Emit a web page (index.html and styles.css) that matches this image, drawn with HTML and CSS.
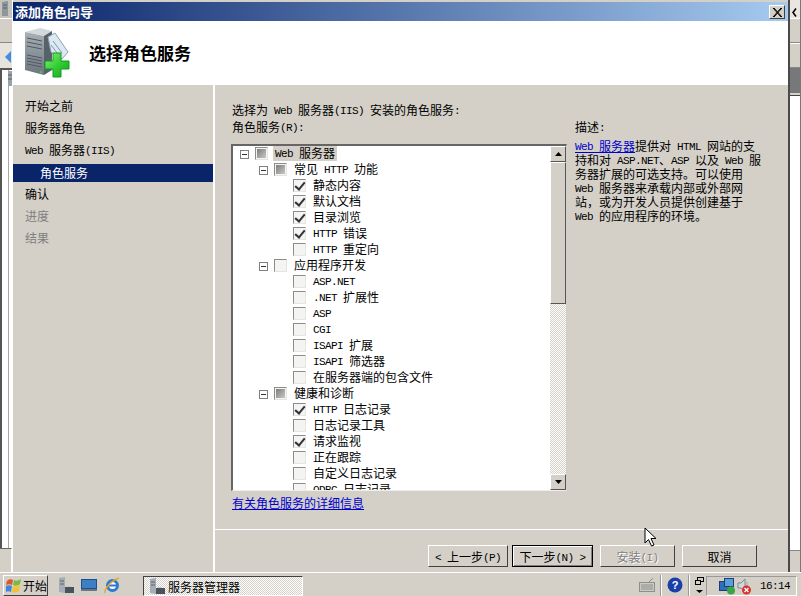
FILE: index.html
```html
<!DOCTYPE html>
<html lang="zh-CN">
<head>
<meta charset="UTF-8">
<title>添加角色向导</title>
<link rel="stylesheet" href="styles.css">
</head>
<body>
<div class="desktop">
  <div class="back-left">
    <div class="back-top"><svg width="6" height="15" viewBox="0 0 6 15"><path d="M0 1 L6 0 V15 H0 Z" fill="#8f979e"/><path d="M1 4 H5 M1 7 H5" stroke="#566069"/></svg></div>
    <div class="back-bar"></div>
    <div class="back-nav"><svg width="6" height="12" viewBox="0 0 6 12"><path d="M6 0 L0 6 L6 12 Z" fill="#3f8fdc"/></svg></div>
    <div class="back-pane"><svg width="5" height="15" viewBox="0 0 5 15"><path d="M0 0 H5 V15 H0 Z" fill="#9aa2a9"/><path d="M0 4 H5 M0 8 H5" stroke="#566069"/></svg></div>
    <div class="back-foot"></div>
  </div>

  <div class="wizard">
    <div class="titlebar">
      <span class="titlebar-text">添加角色向导</span>
      <span class="close-btn"><svg width="10" height="9" viewBox="0 0 10 9"><path d="M1 0 L9 9 M2 0 L10 9 M9 0 L1 9 M10 0 L2 9" stroke="#000" stroke-width="1"/></svg></span>
    </div>
    <div class="head">
      <svg class="head-icon" width="48" height="50" viewBox="0 0 48 50">
        <defs>
          <linearGradient id="front" x1="0" y1="0" x2="0" y2="1"><stop offset="0" stop-color="#a9b0b6"/><stop offset="1" stop-color="#6c757d"/></linearGradient>
          <linearGradient id="plus" x1="0" y1="0" x2="1" y2="1"><stop offset="0" stop-color="#8cf07a"/><stop offset="0.5" stop-color="#35cf35"/><stop offset="1" stop-color="#12a522"/></linearGradient>
        </defs>
        <path d="M1 4 L16 0 L28 3 L20 8 Z" fill="#d3d8dc"/>
        <path d="M1 4 L20 8 L20 47 L1 42 Z" fill="url(#front)"/>
        <path d="M20 8 L28 3 L28 42 L20 47 Z" fill="#57616a"/>
        <path d="M3 10 L18 13 M3 14 L18 17 M3 18 L18 21 M3 27 L18 30 M3 30 L18 33 M3 33 L18 36 M3 36 L18 39" stroke="#4f5962"/>
        <path d="M16 44 L18 44.5" stroke="#58c43f" stroke-width="2"/>
        <path d="M24 9 L31 5 L44 24 L38 31 L27 24 Z" fill="#dce8f2" stroke="#8ba3bb"/>
        <path d="M29 13 L38 25 M27 17 L34 26" stroke="#7f97ad"/>
        <path d="M29 25 H37 V33 H45 V41 H37 V49 H29 V41 H21 V33 H29 Z" fill="url(#plus)" stroke="#129a20" stroke-width="1"/>
      </svg>
      <h1 class="head-title">选择角色服务</h1>
    </div>
    <div class="body">
      <nav class="steps">
        <div class="step">开始之前</div>
        <div class="step">服务器角色</div>
        <div class="step"><span class="en">Web </span>服务器<span class="en">(IIS)</span></div>
        <div class="step step-current">角色服务</div>
        <div class="step">确认</div>
        <div class="step step-off">进度</div>
        <div class="step step-off">结果</div>
      </nav>
      <div class="main">
        <div class="panes">
          <div class="left-pane">
            <p class="line">选择为<span class="en"> Web </span>服务器<span class="en">(IIS) </span>安装的角色服务<span class="en">:</span></p>
            <p class="line">角色服务<span class="en">(R):</span></p>
            <div class="tree">
              <div class="tree-scroll">
                <div class="row"><i class="exp"></i><i class="cb part"></i><span class="lbl lbl-sel"><span class="en">Web </span>服务器</span></div>
                <div class="row lv1"><i class="exp"></i><i class="cb part"></i><span class="lbl">常见<span class="en"> HTTP </span>功能</span></div>
                <div class="row lv2"><i class="cb on"></i><span class="lbl">静态内容</span></div>
                <div class="row lv2"><i class="cb on"></i><span class="lbl">默认文档</span></div>
                <div class="row lv2"><i class="cb on"></i><span class="lbl">目录浏览</span></div>
                <div class="row lv2"><i class="cb on"></i><span class="lbl"><span class="en">HTTP </span>错误</span></div>
                <div class="row lv2"><i class="cb"></i><span class="lbl"><span class="en">HTTP </span>重定向</span></div>
                <div class="row lv1"><i class="exp"></i><i class="cb"></i><span class="lbl">应用程序开发</span></div>
                <div class="row lv2"><i class="cb"></i><span class="lbl"><span class="en">ASP.NET</span></span></div>
                <div class="row lv2"><i class="cb"></i><span class="lbl"><span class="en">.NET </span>扩展性</span></div>
                <div class="row lv2"><i class="cb"></i><span class="lbl"><span class="en">ASP</span></span></div>
                <div class="row lv2"><i class="cb"></i><span class="lbl"><span class="en">CGI</span></span></div>
                <div class="row lv2"><i class="cb"></i><span class="lbl"><span class="en">ISAPI </span>扩展</span></div>
                <div class="row lv2"><i class="cb"></i><span class="lbl"><span class="en">ISAPI </span>筛选器</span></div>
                <div class="row lv2"><i class="cb"></i><span class="lbl">在服务器端的包含文件</span></div>
                <div class="row lv1"><i class="exp"></i><i class="cb part"></i><span class="lbl">健康和诊断</span></div>
                <div class="row lv2"><i class="cb on"></i><span class="lbl"><span class="en">HTTP </span>日志记录</span></div>
                <div class="row lv2"><i class="cb"></i><span class="lbl">日志记录工具</span></div>
                <div class="row lv2"><i class="cb on"></i><span class="lbl">请求监视</span></div>
                <div class="row lv2"><i class="cb"></i><span class="lbl">正在跟踪</span></div>
                <div class="row lv2"><i class="cb"></i><span class="lbl">自定义日志记录</span></div>
                <div class="row lv2"><i class="cb"></i><span class="lbl"><span class="en">ODBC </span>日志记录</span></div>
              </div>
              <div class="scrollbar">
                <div class="sb-btn"><svg width="7" height="4" viewBox="0 0 7 4"><path d="M3.5 0 L7 4 H0 Z"/></svg></div>
                <div class="sb-thumb"></div>
                <div class="sb-track"></div>
                <div class="sb-btn"><svg width="7" height="4" viewBox="0 0 7 4"><path d="M0 0 H7 L3.5 4 Z"/></svg></div>
              </div>
            </div>
            <a class="link more-link" href="#">有关角色服务的详细信息</a>
          </div>
          <div class="desc">
            <p class="desc-title">描述<span class="en">:</span></p>
            <p class="desc-text"><a class="link" href="#"><span class="en">Web </span>服务器</a>提供对<span class="en"> HTML </span>网站的支<br>持和对<span class="en"> ASP.NET</span>、<span class="en">ASP </span>以及<span class="en"> Web </span>服<br>务器扩展的可选支持。可以使用<br><span class="en">Web </span>服务器来承载内部或外部网<br>站，或为开发人员提供创建基于<br><span class="en">Web </span>的应用程序的环境。</p>
          </div>
        </div>
        <div class="actions">
          <button class="btn btn-back"><span class="en">&lt; </span>上一步<span class="en">(P)</span></button>
          <button class="btn btn-default">下一步<span class="en">(N) &gt;</span></button>
          <button class="btn btn-disabled">安装<span class="en">(I)</span></button>
          <button class="btn">取消</button>
        </div>
      </div>
    </div>
  </div>

  <div class="back-right">
    <div class="back-r1"><svg width="5" height="9" viewBox="0 0 5 9"><path d="M4 0.5 L1 4.5 L4 8.5" fill="none" stroke="#000" stroke-width="1.5"/></svg></div>
    <div class="back-r2"></div>
    <div class="back-r2"></div>
    <div class="back-r3"></div>
    <div class="back-r4"></div>
    <div class="back-r5"></div>
  </div>
</div>

<svg class="cursor" width="13" height="20" viewBox="0 0 13 20"><path d="M1 1 V16 L4.5 12.5 L7.5 19 L10 18 L7 11.5 H12 Z" fill="#fff" stroke="#000"/></svg>

<div class="taskbar">
  <div class="start">
    <svg width="15" height="15" viewBox="0 0 15 15"><path d="M1 3 C3 1 5 1 7 2 L6 7 C4 6 2 6 0 7 Z" fill="#e0552c"/><path d="M8 2 C10 3 12 3 15 1 L14 6 C12 8 9 8 7 7 Z" fill="#7fb83e"/><path d="M0 8 C2 7 4 7 6 8 L5 14 C3 13 1 13 0 14 Z" fill="#3f86d6"/><path d="M7 8 C9 9 11 9 14 7 L13 13 C11 15 8 15 6 14 Z" fill="#f2c230"/></svg>
    <span>开始</span>
  </div>
  <div class="quick">
    <svg width="16" height="17" viewBox="0 0 16 17"><path d="M1 1 L7 0 V16 L1 15 Z" fill="#a4adb5"/><rect x="7" y="10" width="9" height="6" fill="#4a535c"/><path d="M8 9 H13 V10 H8 Z" fill="#c4c9cd"/><path d="M2 4 H6 M2 7 H6" stroke="#5d6670"/></svg>
    <svg width="16" height="13" viewBox="0 0 16 13"><rect width="16" height="12" fill="#1f4f88"/><rect x="1" y="1" width="14" height="8" fill="#3c7fc4"/><rect y="10" width="16" height="2" fill="#6d7680"/></svg>
    <svg width="16" height="17" viewBox="0 0 16 17"><circle cx="8.5" cy="8.5" r="5" fill="#fff" stroke="#2e78d0" stroke-width="3"/><path d="M5 8.5 H13" stroke="#2e78d0" stroke-width="2"/><path d="M1 16 C0 12 8 3 15 1" fill="none" stroke="#e7a92c" stroke-width="1.5"/></svg>
  </div>
  <div class="task-item">
    <svg width="16" height="17" viewBox="0 0 16 17"><path d="M1 1 L7 0 V16 L1 15 Z" fill="#a4adb5"/><rect x="7" y="10" width="9" height="6" fill="#4a535c"/><path d="M8 9 H13 V10 H8 Z" fill="#c4c9cd"/><path d="M2 4 H6 M2 7 H6" stroke="#5d6670"/></svg>
    <span>服务器管理器</span>
  </div>
  <div class="tray-left">
    <svg width="16" height="14" viewBox="0 0 16 14"><rect x="0.5" y="4.5" width="15" height="9" fill="#c9c9c5" stroke="#8e8e8a"/><path d="M2 7 H14 M2 9 H14 M2 11 H14" stroke="#8e8e8a"/><path d="M10 4 L14 0" stroke="#8e8e8a"/></svg>
    <span class="sep"></span>
    <svg width="16" height="16" viewBox="0 0 16 16"><circle cx="8" cy="8" r="7.5" fill="#1b3fa8"/><text x="8" y="12" font-family="Liberation Sans" font-size="11" font-weight="bold" fill="#fff" text-anchor="middle">?</text></svg>
    <span class="sep"></span>
    <div class="tray-toggle">
      <svg width="9" height="17" viewBox="0 0 9 17"><rect x="2.5" y="0.5" width="6" height="4" fill="none" stroke="#000"/><rect x="0.5" y="3.5" width="5" height="4" fill="#d4d0c8" stroke="#000"/><path d="M1 13 H8 L4.5 16 Z"/></svg>
    </div>
  </div>
  <div class="tray">
    <svg width="17" height="17" viewBox="0 0 17 17"><rect x="0.5" y="3.5" width="10" height="9" fill="#2e6fb8" stroke="#1c3f70"/><rect x="5.5" y="0.5" width="9" height="8" fill="#5b9be0" stroke="#1c3f70"/><circle cx="12" cy="12.5" r="4" fill="#3da544"/></svg>
    <svg width="18" height="17" viewBox="0 0 18 17"><path d="M1 5 H4 L8 1 V14 L4 10 H1 Z" fill="#cfd6dc" stroke="#7c8a96"/><path d="M10 4 V9" stroke="#9aa5ae"/><circle cx="9.5" cy="12" r="4.5" fill="#d8342c"/><path d="M7.5 10 L11.5 14 M11.5 10 L7.5 14" stroke="#fff" stroke-width="1.3"/></svg>
    <span class="clock en">16:14</span>
  </div>
</div>
</body>
</html>
```

FILE: styles.css
```css
* {
  box-sizing: border-box;
}
html, body {
  margin: 0;
  height: 596px;
  overflow: hidden;
}
body {
  font-family: "Noto Sans CJK SC", "DejaVu Sans", sans-serif;
  font-size: 12px;
  color: #000;
  background-color: #d4d0c8;
  display: flex;
  flex-direction: column;
  position: relative;
}
p {
  margin: 0;
}
/* latin runs are half the width of the CJK glyphs */
.en {
  font-family: "Liberation Mono", monospace;
  font-size: 11px;
  letter-spacing: -0.6px;
  line-height: 1;
  vertical-align: 1px;
  white-space: pre;
}
.desktop {
  display: flex;
  height: 572px;
}
/* mouse pointer, lies over the wizard */
.cursor {
  position: absolute;
  left: 644px;
  top: 527px;
}

/* window behind the wizard */
.back-left {
  width: 12px;
  display: flex;
  flex-direction: column;
}
.back-top {
  height: 18px;
  padding: 1px 0 0 2px;
  background-color: #c6c3bc;
}
.back-bar {
  height: 25px;
  background-color: #d4d0c8;
  border-top: 1px solid #fff;
  border-bottom: 1px solid #888;
}
.back-nav {
  height: 27px;
  padding: 6px 0 0 5px;
  background-color: #e6e3dc;
  border-bottom: 2px solid #555;
}
.back-pane {
  flex: 1;
  padding: 1px 0 0 6px;
  background-color: #fff;
  border-left: 2px solid #555;
  border-right: 3px solid #fff;
  box-shadow: inset -1px 0 #a8a8a8;
}
.back-foot {
  height: 24px;
  background-color: #d4d0c8;
  border-top: 1px solid #666;
  border-right: 1px solid #fff;
}
.back-right {
  flex: 1;
  display: flex;
  flex-direction: column;
  background-color: #fff;
  border-left: 2px solid #4a4a4a;
  border-right: 1px solid #777;
}
.back-r1 {
  height: 18px;
  padding: 3px 0 0 2px;
  background-color: #e8e6e0;
}
.back-r2 {
  height: 25px;
  background-color: #d4d0c8;
  border-top: 1px solid #fff;
  border-bottom: 1px solid #888;
}
.back-r3 {
  height: 27px;
  background-color: #77787a;
  border-bottom: 2px solid #d4d0c8;
}
.back-r4 {
  flex: 1;
  background-color: #fff;
  border-top: 1px solid #444;
}
.back-r5 {
  height: 22px;
  background-color: #d4d0c8;
  border-top: 1px solid #888;
}

/* wizard */
.wizard {
  width: 776px;
  display: flex;
  flex-direction: column;
  border-left: 1px solid #fff;
  background-color: #d4d0c8;
}
.titlebar {
  height: 21px;
  display: flex;
  align-items: center;
  justify-content: space-between;
  padding: 0 3px 0 2px;
  background: linear-gradient(to right, #0a246a, #a6caf0);
  border-top: 2px solid #d4d0c8;
}
.titlebar-text {
  color: #fff;
  font-weight: bold;
  font-size: 13px;
}
.close-btn {
  width: 16px;
  height: 14px;
  margin-top: 1px;
  display: flex;
  align-items: center;
  justify-content: center;
  background-color: #d4d0c8;
  border: 1px solid;
  border-color: #fff #404040 #404040 #fff;
}
.head {
  height: 64px;
  display: flex;
  align-items: center;
  background-color: #fff;
  padding-left: 11px;
}
.head-title {
  margin: 0 0 2px 17px;
  font-size: 17px;
  font-weight: bold;
}
.head-icon {
  display: block;
}
.body {
  flex: 1;
  display: flex;
  min-height: 0;
}
.steps {
  width: 200px;
  padding-top: 11px;
  flex-shrink: 0;
}
.step {
  height: 22px;
  line-height: 20px;
  padding-left: 12px;
}
.step-current {
  height: 18px;
  line-height: 17px;
  margin: 2px 0;
  padding-left: 27px;
  background-color: #0a246a;
  color: #fff;
}
.step-off {
  color: #808080;
}
.main {
  flex: 1;
  display: flex;
  flex-direction: column;
  border-left: 2px solid #fff;
}
.panes {
  flex: 1;
  display: flex;
  padding: 17px 0 0 17px;
  border-bottom: 1px solid #fff;
}
.left-pane {
  width: 336px;
}
.line {
  height: 17px;
  line-height: 15px;
}
.tree {
  margin: 8px 1px 0 -1px;
  height: 347px;
  display: flex;
  background-color: #fff;
  border: solid;
  border-width: 2px 1px 1px 2px;
  border-color: #666 #d4d0c8 #f0eee8 #666;
}
.tree-scroll {
  flex: 1;
  overflow: hidden;
  padding-left: 7px;
}
.row {
  height: 16px;
  display: flex;
  white-space: nowrap;
}
.lv1 {
  padding-left: 19px;
}
.lv2 {
  padding-left: 53px;
}
.exp {
  width: 9px;
  height: 9px;
  margin: 4px 6px 0 0;
  border: 1px solid #808080;
  background: linear-gradient(#333, #333) center / 5px 1px no-repeat #fff;
}
.cb {
  width: 13px;
  height: 13px;
  margin: 1px 5px 0 0;
  border: 1px solid #8c8c8c;
  border-right-color: #e4e4e0;
  border-bottom-color: #e4e4e0;
  background-color: #f4f4f2;
  position: relative;
}
.part::after {
  content: "";
  position: absolute;
  inset: 1px;
  background: linear-gradient(135deg, #7c7c7a, #c8c8c6);
}
.on::after {
  content: "";
  position: absolute;
  left: 3px;
  top: 0;
  width: 4px;
  height: 8px;
  border: solid #333;
  border-width: 0 2px 2px 0;
  transform: rotate(40deg);
}
.lbl {
  height: 15px;
  padding: 0 2px;
  line-height: 13px;
}
.lbl-sel {
  background-color: #d4d0c8;
}
.scrollbar {
  width: 16px;
  display: flex;
  flex-direction: column;
  background: repeating-conic-gradient(#d4d0c8 0 25%, #fff 0 50%) 0 0 / 2px 2px;
}
.sb-btn, .sb-thumb {
  background-color: #d4d0c8;
  border: 1px solid;
  border-color: #fff #555 #555 #fff;
}
.sb-btn {
  height: 16px;
  display: flex;
  align-items: center;
  justify-content: center;
}
.sb-thumb {
  height: 142px;
}
.sb-track {
  flex: 1;
}
.link {
  color: #0000cc;
  text-decoration: underline;
}
.more-link {
  display: block;
  margin-top: 3px;
  line-height: 17px;
}
.desc {
  padding: 17px 0 0 7px;
}
.desc-title {
  height: 20px;
  line-height: 15px;
}
.desc-text {
  line-height: 14px;
  white-space: nowrap;
}
.actions {
  height: 42px;
  display: flex;
  justify-content: flex-end;
  padding: 15px 31px 0 0;
  gap: 7px;
}
.btn {
  width: 75px;
  height: 22px;
  padding: 0;
  font: inherit;
  color: #000;
  background-color: #d4d0c8;
  border: 1px solid;
  border-color: #fff #404040 #404040 #fff;
}
.btn-back {
  width: 80px;
  margin-right: -3px;
}
.btn-default {
  width: 81px;
  border-color: #000;
  box-shadow: inset 1px 1px #fff, inset -1px -1px #808080;
}
.btn-disabled {
  color: #808080;
  text-shadow: 1px 1px #fff;
}

/* taskbar */
.taskbar {
  height: 24px;
  display: flex;
  align-items: flex-end;
  border-top: 1px solid #fff;
  background-color: #d4d0c8;
}
.start {
  width: 45px;
  height: 21px;
  margin-left: 3px;
  display: flex;
  align-items: center;
  gap: 2px;
  padding-left: 2px;
  border: 1px solid;
  border-color: #fff #404040 #404040 #fff;
}
.quick {
  width: 95px;
  height: 21px;
  display: flex;
  align-items: center;
  gap: 7px;
  padding-left: 10px;
}
.task-item {
  width: 160px;
  height: 20px;
  display: flex;
  align-items: center;
  gap: 3px;
  padding-left: 5px;
  border: 1px solid;
  border-color: #404040 #fff #fff #404040;
  background: repeating-conic-gradient(#d4d0c8 0 25%, #fff 0 50%) 0 0 / 2px 2px;
}
.tray-left {
  height: 22px;
  margin-left: auto;
  display: flex;
  align-items: center;
  gap: 5px;
}
.sep {
  width: 2px;
  height: 21px;
  border-left: 1px solid #999;
  border-right: 1px solid #fff;
}
.tray-toggle {
  display: flex;
  margin-right: 2px;
}
.tray {
  width: 91px;
  height: 20px;
  margin-right: 4px;
  display: flex;
  align-items: center;
  padding-left: 12px;
  gap: 1px;
  border: 1px solid;
  border-color: #999 #fff #fff #999;
}
.clock {
  margin-left: 4px;
}
```
